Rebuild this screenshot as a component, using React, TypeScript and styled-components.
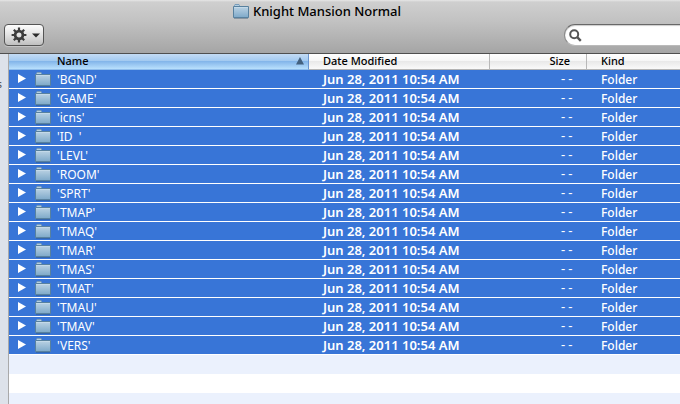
import React from 'react';
import styled, { createGlobalStyle } from 'styled-components';

const GlobalStyle = createGlobalStyle`
  * { box-sizing: border-box; }
  body {
    margin: 0;
    background: #fff;
    font-family: "Noto Sans", "Open Sans", sans-serif;
    overflow: hidden;
  }
  button, input { font: inherit; margin: 0; }
`;

const Window = styled.div`
  display: flex;
  flex-direction: column;
  min-height: 100vh;
  overflow: hidden;
`;

const Header = styled.header`
  background: linear-gradient(#e6e6e6 0, #cfcfcf 2px, #c2c2c2 40%, #a5a5a5 100%);
  border-bottom: 1px solid #4f4f4f;
`;

const TitleBar = styled.div`
  display: flex;
  align-items: center;
  justify-content: center;
  gap: 4px;
  height: 22px;
  padding-right: 46px;
`;

const Title = styled.h1`
  margin: 0;
  font-size: 13px;
  line-height: 20px;
  font-weight: 500;
  color: #000;
  white-space: nowrap;
`;

const Toolbar = styled.div`
  display: flex;
  justify-content: space-between;
  padding: 2px 0 7px 4px;
`;

const ActionButton = styled.button`
  display: flex;
  align-items: center;
  gap: 5px;
  width: 40px;
  height: 22px;
  padding: 0 0 0 6px;
  border: 1px solid #555;
  border-radius: 4px;
  background: linear-gradient(#fdfdfd, #e2e2e2 50%, #c0c0c0);
  box-shadow: 0 1px 0 #c4c4c4;
`;

const Search = styled.label`
  display: flex;
  align-items: center;
  width: 136px;
  height: 22px;
  margin-right: -20px;
  padding-left: 4px;
  border: 1px solid #8a8a8a;
  border-top-color: #686868;
  border-bottom-color: #bababa;
  border-radius: 11px;
  background: #fff;
  box-shadow: inset 0 1px 1px #ccc;
`;

const SearchInput = styled.input`
  flex: 1;
  min-width: 0;
  padding: 0 4px;
  border: 0;
  outline: 0;
  background: transparent;
  font-size: 12px;
`;

const Body = styled.div`
  display: flex;
  flex: 1;
`;

const Sidebar = styled.aside`
  display: flex;
  justify-content: flex-end;
  flex: none;
  width: 9px;
  padding: 22px 6px 0 0;
  overflow: hidden;
  background: #dde2ea;
  border-right: 1px solid #a9a9a9;
  color: #555;
  font-size: 11px;
  line-height: 16px;
`;

const Listing = styled.main`
  display: flex;
  flex-direction: column;
  flex: 1;
  min-width: 0;
`;

const Table = styled.table`
  width: 100%;
  table-layout: fixed;
  border-collapse: separate;
  border-spacing: 0;
`;

const Col = styled.col<{ $width?: number }>`
  width: ${p => (p.$width ? `${p.$width}px` : 'auto')};
`;

const HeadCell = styled.th<{ $sorted?: boolean; $end?: boolean }>`
  height: 16px;
  padding: ${p => (p.$end ? '0 16px 1px 0' : '0 0 1px 14px')};
  text-align: ${p => (p.$end ? 'right' : 'left')};
  border-right: 1px solid ${p => (p.$sorted ? '#6a95cf' : '#b8b8b8')};
  border-bottom: 1px solid ${p => (p.$sorted ? '#8fbdec' : '#b4b4b4')};
  background: ${p =>
    p.$sorted
      ? 'linear-gradient(#c3dbf4, #a3caf0 45%, #84b6ea 50%, #b9e0fd)'
      : 'linear-gradient(#fff, #f6f6f6 45%, #e9e9e9 50%, #fafafa)'};
  color: #000;
  font-size: 11px;
  line-height: 14px;
  font-weight: 500;
  white-space: nowrap;
  &:first-child { padding-left: 48px; }
  &:last-child { border-right: 0; }
`;

const SortButton = styled.button`
  display: flex;
  align-items: center;
  justify-content: space-between;
  width: 100%;
  height: 14px;
  padding: 0 4px 0 0;
  border: 0;
  background: transparent;
  color: #000;
  font-weight: 500;
`;

const Cell = styled.td`
  height: 19px;
  padding: 2px 0 0 14px;
  border-bottom: 1px solid #fff;
  background: #3875d7;
  color: #fff;
  font-size: 12px;
  line-height: 16px;
  font-weight: 500;
  white-space: pre;
`;

const DateCell = styled(Cell)`
  padding: 1px 0 1px 14px;
  font-size: 13px;
  font-weight: 600;
`;

const NameCell = styled(Cell)`
  padding: 0 0 0 9px;
`;

const SizeCell = styled(Cell)`
  padding: 2px 13px 0 0;
  text-align: right;
  font-family: "Liberation Mono", monospace;
`;

const NameLine = styled.div`
  display: flex;
  align-items: center;
  height: 18px;
`;

const Disclosure = styled.button`
  display: flex;
  width: 17px;
  padding: 0 0 1px;
  border: 0;
  background: transparent;
`;

const FileName = styled.span`
  margin-left: 6px;
  padding-top: 2px;
  font-weight: 400;
`;

const Stripes = styled.div`
  flex: 1;
  background: repeating-linear-gradient(#ebf1fd 0 19px, #fff 19px 38px);
`;

const FolderIcon = () => (
  <svg width="16" height="16" viewBox="0 0 16 16" aria-hidden="true">
    <defs>
      <linearGradient id="folder" x1="0" y1="0" x2="0" y2="1">
        <stop offset="0" stopColor="#bcd3e4" />
        <stop offset="1" stopColor="#7ea9c9" />
      </linearGradient>
    </defs>
    <path d="M1 15.5h14" stroke="#2f506e" strokeOpacity=".4" />
    <path d="M1.5 4V2.5L2 1.5h4l.5 1V4" fill="#b4cfe3" stroke="#789cb9" />
    <path d="M.5 3.5h15v11H.5z" fill="url(#folder)" stroke="#58819f" />
    <path d="M1 4.5h14" stroke="#c4d9e8" />
  </svg>
);

const GearIcon = () => (
  <svg width="16" height="16" viewBox="0 0 16 16" aria-hidden="true">
    <g stroke="#3c3c3c" fill="none">
      <circle cx="8" cy="8" r="3.9" strokeWidth="2.8" />
      <path
        strokeWidth="2.2"
        d="M8 .6v3M8 12.4v3M.6 8h3M12.4 8h3M2.8 2.8l2 2M11.2 11.2l2 2M2.8 13.2l2-2M11.2 4.8l2-2"
      />
    </g>
  </svg>
);

const CaretDown = () => (
  <svg width="8" height="5" viewBox="0 0 8 5" aria-hidden="true">
    <path d="M0 .5h8L4 4.5z" fill="#2c2c2c" />
  </svg>
);

const SortArrow = () => (
  <svg width="8" height="8" viewBox="0 0 8 8" aria-hidden="true">
    <path d="M4 0l4 7.5H0z" fill="#43617f" />
  </svg>
);

const Triangle = () => (
  <svg width="8" height="9" viewBox="0 0 8 9" aria-hidden="true">
    <path d="M0 0l8 4.5L0 9z" fill="#fff" />
  </svg>
);

const Magnifier = () => (
  <svg width="13" height="13" viewBox="0 0 13 13" aria-hidden="true">
    <circle cx="5.2" cy="5.2" r="4" fill="none" stroke="#555" strokeWidth="2" />
    <path d="M8.2 8.2l3.6 3.6" stroke="#555" strokeWidth="2.4" />
  </svg>
);

const folders = [
  'BGND', 'GAME', 'icns', 'ID  ', 'LEVL', 'ROOM', 'SPRT', 'TMAP',
  'TMAQ', 'TMAR', 'TMAS', 'TMAT', 'TMAU', 'TMAV', 'VERS',
];

export default function App() {
  return (
    <Window>
      <GlobalStyle />
      <Header>
        <TitleBar>
          <FolderIcon />
          <Title>Knight Mansion Normal</Title>
        </TitleBar>
        <Toolbar>
          <ActionButton type="button" aria-label="Actions">
            <GearIcon />
            <CaretDown />
          </ActionButton>
          <Search>
            <Magnifier />
            <SearchInput type="text" aria-label="Search" />
          </Search>
        </Toolbar>
      </Header>
      <Body>
        <Sidebar>s</Sidebar>
        <Listing>
          <Table>
            <colgroup>
              <Col $width={300} />
              <Col $width={181} />
              <Col $width={97} />
              <Col />
            </colgroup>
            <thead>
              <tr>
                <HeadCell $sorted aria-sort="ascending">
                  <SortButton type="button">
                    Name
                    <SortArrow />
                  </SortButton>
                </HeadCell>
                <HeadCell>Date Modified</HeadCell>
                <HeadCell $end>Size</HeadCell>
                <HeadCell>Kind</HeadCell>
              </tr>
            </thead>
            <tbody>
              {folders.map(name => (
                <tr key={name}>
                  <NameCell>
                    <NameLine>
                      <Disclosure type="button" aria-label={`Expand ${name.trim()}`}>
                        <Triangle />
                      </Disclosure>
                      <FolderIcon />
                      <FileName>{`'${name}'`}</FileName>
                    </NameLine>
                  </NameCell>
                  <DateCell>Jun 28, 2011 10:54 AM</DateCell>
                  <SizeCell>--</SizeCell>
                  <Cell>Folder</Cell>
                </tr>
              ))}
            </tbody>
          </Table>
          <Stripes />
        </Listing>
      </Body>
    </Window>
  );
}
